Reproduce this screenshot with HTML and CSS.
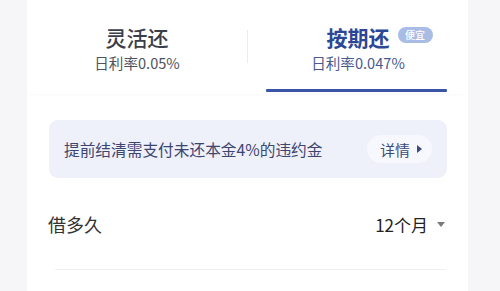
FILE: index.html
```html
<!DOCTYPE html>
<html lang="zh">
<head>
<meta charset="utf-8">
<link rel="stylesheet" href="styles.css">
</head>
<body>
<div class="page">
  <div class="card">
    <div class="tabs">
      <div class="tab">
        <div class="tab-title">灵活还</div>
        <div class="tab-rate">日利率0.05%</div>
      </div>
      <div class="sep"></div>
      <div class="tab active">
        <div class="tab-title"><span class="title-text">按期还<span class="badge">便宜</span></span></div>
        <div class="tab-rate">日利率0.047%</div>
        <div class="underline"></div>
      </div>
    </div>
    <div class="notice">
      <span class="notice-text">提前结清需支付未还本金4%的违约金</span>
      <span class="detail">详情<span class="tri"></span></span>
    </div>
    <div class="row">
      <span class="label">借多久</span>
      <span class="value">12个月<span class="caret"></span></span>
    </div>
    <div class="divider"></div>
  </div>
</div>
</body>
</html>
```

FILE: styles.css
```css
* { box-sizing: border-box; }
html, body { margin: 0; padding: 0; }
body {
  width: 500px;
  height: 291px;
  overflow: hidden;
  background: #f6f6f8;
  font-family: "Noto Sans CJK SC", "Noto Sans", sans-serif;
}
.page {
  padding-left: 27px;
  height: 291px;
}
.card {
  width: 441px;
  height: 291px;
  background: #ffffff;
  display: flex;
  flex-direction: column;
}
.tabs {
  display: flex;
  height: 94px;
  align-items: flex-start;
  box-shadow: 0 3px 4px -3px rgba(0,0,0,0.05);
}
.tab {
  flex: 1;
  display: flex;
  flex-direction: column;
  align-items: center;
  padding-top: 22px;
  position: relative;
  height: 94px;
}
.tab:first-child { width: 220px; flex: none; }
.sep {
  width: 1px;
  height: 33px;
  margin-top: 30px;
  background: #ececef;
}
.tab-title {
  font-size: 21px;
  line-height: 30px;
  color: #3b3e4b;
  font-weight: 500;
}
.tab-rate {
  font-size: 14.6px;
  line-height: 20px;
  color: #50535d;
  margin-top: 1px;
}
.active .tab-title {
  color: #2b4796;
  font-weight: 700;
}
.active .tab-rate { color: #4a5a8c; }
.title-text { position: relative; }
.badge {
  position: absolute;
  left: 71px;
  top: 5px;
  width: 35px;
  height: 16px;
  border-radius: 8px;
  background: #a9bce6;
  color: #ffffff;
  font-size: 10px;
  line-height: 16px;
  font-weight: 500;
  text-align: center;
}
.underline {
  position: absolute;
  left: 18px;
  right: 21px;
  top: 89px;
  height: 3px;
  background: #3a54a8;
  border-radius: 1px;
}
.notice {
  margin: 26px 21px 0 22px;
  height: 58px;
  border-radius: 9px;
  background: #eef0fa;
  display: flex;
  align-items: center;
  justify-content: space-between;
  padding: 0 15px 0 15px;
}
.notice-text {
  font-size: 15.7px;
  color: #3d4670;
}
.detail {
  display: flex;
  align-items: center;
  height: 28px;
  padding: 0 10px 0 13px;
  border-radius: 14px;
  background: #f7f8fd;
  font-size: 15px;
  color: #3d4a7a;
}
.tri {
  width: 0;
  height: 0;
  margin-left: 7px;
  border-top: 4px solid transparent;
  border-bottom: 4px solid transparent;
  border-left: 5px solid #3d4a7a;
}
.row {
  display: flex;
  align-items: center;
  justify-content: space-between;
  height: 64px;
  margin-top: 14px;
  padding: 0 23px 0 21px;
}
.label {
  font-size: 18px;
  color: #333333;
}
.value {
  display: flex;
  align-items: center;
  font-size: 17px;
  color: #222222;
}
.caret {
  width: 0;
  height: 0;
  margin-left: 9px;
  border-left: 4px solid transparent;
  border-right: 4px solid transparent;
  border-top: 5px solid #7a7a7a;
}
.divider {
  margin: 13px 22px 0 28px;
  height: 1px;
  background: #f0f0f2;
}
```
